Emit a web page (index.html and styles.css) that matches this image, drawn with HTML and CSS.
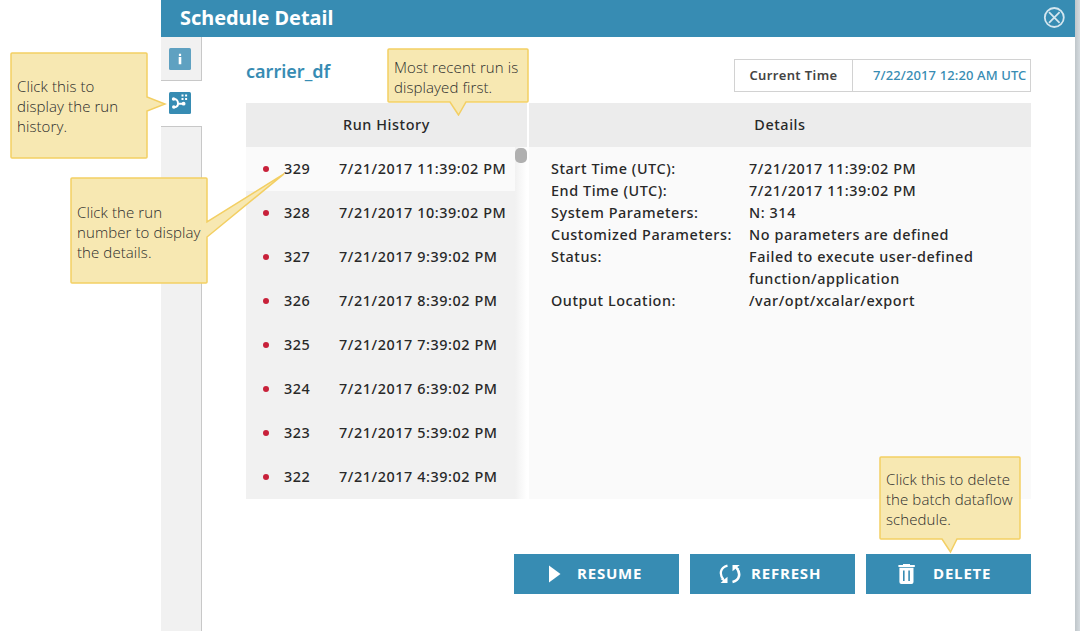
FILE: index.html
```html
<!DOCTYPE html>
<html lang="en">
<head>
<meta charset="utf-8">
<title>Schedule Detail</title>
<link rel="stylesheet" href="styles.css">
</head>
<body>
<div class="modal">
  <header class="modal-header">
    <h1 class="modal-title">Schedule Detail</h1>
    <svg class="close" width="22" height="22" viewBox="0 0 22 22"><circle cx="11.300" cy="10.500" r="9.500"/><path d="M6 5.200 16.600 15.800M16.600 5.200 6 15.800"/></svg>
  </header>
  <div class="modal-body">
    <nav class="tabs">
      <div class="tab tab-info">
        <svg width="22" height="22" viewBox="0 0 22 22"><rect width="22" height="22" rx="1.5" fill="#5fa1c1"/><path d="M9.9 5.8h2.2v2.1H9.9zM9.7 9h2.6v7.2H9.7z" fill="#fff"/></svg>
      </div>
      <div class="tab tab-active">
        <svg width="22" height="22" viewBox="0 0 22 22"><rect width="22" height="22" rx="1.5" fill="#378cb3"/><g fill="#fff"><circle cx="4.600" cy="7" r="1.800"/><circle cx="4.800" cy="15" r="1.800"/><circle cx="14.600" cy="11.700" r="1.900"/><path d="M12.500 2.400h2v2h-2zM16.100 2.400h2v2h-2zM12.500 5.900h2v2h-2zM16.100 5.900h2v2h-2z"/></g><path d="M4.600 7C7.500 6.900 9 8.600 9 11.400C9 14 7.400 15.200 4.800 15.200M9 11.700h5.600" fill="none" stroke="#fff" stroke-width="2"/></svg>
      </div>
      <div class="tab-rest"></div>
    </nav>
    <main class="content">
      <div class="top-row">
        <h2 class="name">carrier_df</h2>
        <div class="clock"><span class="clock-label">Current Time</span><span class="clock-value">7/22/2017 12:20 AM UTC</span></div>
      </div>
      <div class="panels">
        <section class="history">
          <div class="panel-title">Run History</div>
          <div class="list">
            <div class="runs">
              <div class="run run-selected"><i class="dot"></i><span class="num">329</span><span>7/21/2017 11:39:02 PM</span></div>
              <div class="run"><i class="dot"></i><span class="num">328</span><span>7/21/2017 10:39:02 PM</span></div>
              <div class="run"><i class="dot"></i><span class="num">327</span><span>7/21/2017 9:39:02 PM</span></div>
              <div class="run"><i class="dot"></i><span class="num">326</span><span>7/21/2017 8:39:02 PM</span></div>
              <div class="run"><i class="dot"></i><span class="num">325</span><span>7/21/2017 7:39:02 PM</span></div>
              <div class="run"><i class="dot"></i><span class="num">324</span><span>7/21/2017 6:39:02 PM</span></div>
              <div class="run"><i class="dot"></i><span class="num">323</span><span>7/21/2017 5:39:02 PM</span></div>
              <div class="run"><i class="dot"></i><span class="num">322</span><span>7/21/2017 4:39:02 PM</span></div>
            </div>
            <div class="track"><div class="thumb"></div></div>
          </div>
        </section>
        <section class="details">
          <div class="panel-title">Details</div>
          <dl class="facts">
            <dt>Start Time (UTC):</dt><dd>7/21/2017 11:39:02 PM</dd>
            <dt>End Time (UTC):</dt><dd>7/21/2017 11:39:02 PM</dd>
            <dt>System Parameters:</dt><dd>N: 314</dd>
            <dt>Customized Parameters:</dt><dd>No parameters are defined</dd>
            <dt>Status:</dt><dd>Failed to execute user-defined<br>function/application</dd>
            <dt>Output Location:</dt><dd>/var/opt/xcalar/export</dd>
          </dl>
        </section>
      </div>
      <div class="actions">
        <button class="btn btn-resume"><svg width="12" height="18" viewBox="0 0 12 18"><path d="M0 0.500 11.500 9 0 17.500z" fill="#fff"/></svg><span>RESUME</span></button>
        <button class="btn btn-refresh"><svg width="22" height="20" viewBox="0 0 22 20"><path d="M8.500 1.600C1 3.400.2 10.500 4.400 15.600" fill="none" stroke="#fff" stroke-width="2.300"/><path d="M8.500 12.700V19H1.600L4 16.700 1.200 14.800 5.500 15.300z" fill="#fff"/><path d="M13.500 18C21 16.400 21.800 9 17.600 4" fill="none" stroke="#fff" stroke-width="2.600"/><path d="M13.500 7.300V1H20.800L18 3.300 20.500 5 16.500 4.800z" fill="#fff"/></svg><span>REFRESH</span></button>
        <button class="btn btn-delete"><svg width="18" height="22" viewBox="0 0 18 22"><path d="M0.400 2H5V1h7v1h4.800V4H.4z" fill="#fff"/><path fill-rule="evenodd" d="M1.400 4.800H15.500V19Q15.500 21 13.500 21H3.400Q1.400 21 1.400 19zM5 7.500V18H6.600V7.500zM10.300 7.500V18H11.900V7.500z" fill="#fff"/></svg><span>DELETE</span></button>
      </div>
    </main>
  </div>
  <div class="shade"></div>
</div>
<div class="callout callout-history">
  <svg width="157" height="108"><path d="M2 1H136Q137 1 137 2V45L155 52 137 59V105Q137 106 136 106H2Q1 106 1 105V2Q1 1 2 1z"/></svg>
  <p>Click this to<br>display the run<br>history.</p>
</div>
<div class="callout callout-number">
  <svg width="217" height="111"><path d="M2 5H136Q137 5 137 6V49L214 .8 137 64V109Q137 110 136 110H2Q1 110 1 109V6Q1 5 2 5z"/></svg>
  <p>Click the run<br>number to display<br>the details.</p>
</div>
<div class="callout callout-recent">
  <svg width="142" height="68"><path d="M2 1H140Q141 1 141 2V53Q141 54 140 54H79L71.500 67 63 54H2Q1 54 1 53V2Q1 1 2 1z"/></svg>
  <p>Most recent run is<br>displayed first.</p>
</div>
<div class="callout callout-delete">
  <svg width="142" height="98"><path d="M2 1H140Q141 1 141 2V82Q141 83 140 83H78L71.500 96 63 83H2Q1 83 1 82V2Q1 1 2 1z"/></svg>
  <p>Click this to delete<br>the batch dataflow<br>schedule.</p>
</div>
</body>
</html>
```
FILE: styles.css
```css
* { box-sizing: border-box; }
body { margin: 0; width: 1080px; height: 631px; overflow: hidden; position: relative; background: #fff; font-family: "Noto Sans", "Open Sans", sans-serif; color: #282828; }
h1, h2, p, dl, dd { margin: 0; }
svg { display: block; flex: none; }
.modal { margin-left: 161px; width: 919px; height: 631px; display: grid; grid-template: 37px 1fr / 914px 5px; }
.modal-header { background: #378cb3; display: flex; align-items: center; justify-content: space-between; padding: 0 10px 2px 19px; }
.shade { grid-area: 1 / 2 / 3 / 3; background: linear-gradient(to right, #bfc6ca, #d5dbdf); }
.modal-title { font-size: 19.900px; line-height: 26px; font-weight: 700; color: #fff; }
.close { fill: none; stroke: #d4e6ef; stroke-width: 1.8; }
.modal-body { grid-area: 2 / 1; display: flex; }
.tabs { width: 41px; display: flex; flex-direction: column; }
.tab { padding-left: 8px; }
.tab-info { height: 44px; padding-top: 11px; background: #f1f1f1; border-right: 1px solid #c8c8c8; border-bottom: 1px solid #c8c8c8; }
.tab-active { height: 45px; padding-top: 11px; }
.tab-rest { flex: 1; background: #f1f1f1; border-right: 1px solid #c8c8c8; border-top: 1px solid #c8c8c8; }
.content { width: 829px; padding: 22px 0 0 44px; }
.top-row { display: flex; justify-content: space-between; height: 44px; }
.name { font-size: 18px; line-height: 24px; font-weight: 600; color: #378cb3; }
.clock { display: flex; width: 297px; height: 33px; border: 1px solid #d2d2d2; font-size: 13px; line-height: 31px; white-space: nowrap; }
.clock-label { width: 118px; text-align: center; border-right: 1px solid #d2d2d2; font-weight: 600; color: #444; letter-spacing: .4px; }
.clock-value { padding-left: 20px; color: #378cb3; font-weight: 500; letter-spacing: .12px; }
.panels { display: flex; gap: 2px; height: 396px; font-size: 14.400px; font-weight: 500; letter-spacing: .57px; }
.history { width: 281px; }
.details { width: 502px; background: #fafafa; }
.panel-title { height: 44px; line-height: 44px; text-align: center; background: #ececec; }
.list { display: flex; }
.runs { width: 269px; }
.run { height: 44px; line-height: 22px; display: flex; align-items: center; background: #f1f1f1; padding-left: 17px; white-space: nowrap; }
.run-selected { background: #fafafa; }
.dot { width: 6px; height: 6px; border-radius: 50%; background: #c8213a; margin-right: 15px; }
.num { width: 55px; }
.track { width: 12px; padding-top: 1px; background: linear-gradient(to right, #f1f1f1, #fff); }
.thumb { height: 15px; border-radius: 5px; background: #b0b0b0; }
.facts { display: grid; grid-template-columns: 198px 1fr; padding: 11px 0 0 22px; line-height: 22px; white-space: nowrap; }
.actions { display: flex; justify-content: flex-end; gap: 11px; margin-top: 55px; }
.btn { width: 165px; height: 40px; border: 0; padding: 0; background: #378cb3; display: flex; align-items: center; font: 700 15px/20px "Open Sans", sans-serif; letter-spacing: .8px; color: #fff; }
.btn-resume { padding-left: 35px; gap: 16px; }
.btn-refresh { padding-left: 29px; gap: 10px; }
.btn-delete { padding-left: 32px; gap: 17px; }
.btn span { padding-bottom: 2px; }
.callout { position: absolute; font-size: 15px; font-weight: 300; letter-spacing: .09px; line-height: 20px; color: #2c2c2c; white-space: nowrap; }
.callout path { fill: #f7e7b0; fill-opacity: .97; stroke: #f3cf63; stroke-width: 1.500; }
.callout p { position: absolute; left: 7px; font-family: "Open Sans", sans-serif; }
.callout-history { left: 10px; top: 52px; }
.callout-history p { top: 24px; }
.callout-number { left: 70px; top: 173px; }
.callout-number p { top: 29px; }
.callout-recent { left: 387px; top: 48px; }
.callout-recent p { top: 9px; }
.callout-delete { left: 879px; top: 456px; }
.callout-delete p { top: 13px; }
```
